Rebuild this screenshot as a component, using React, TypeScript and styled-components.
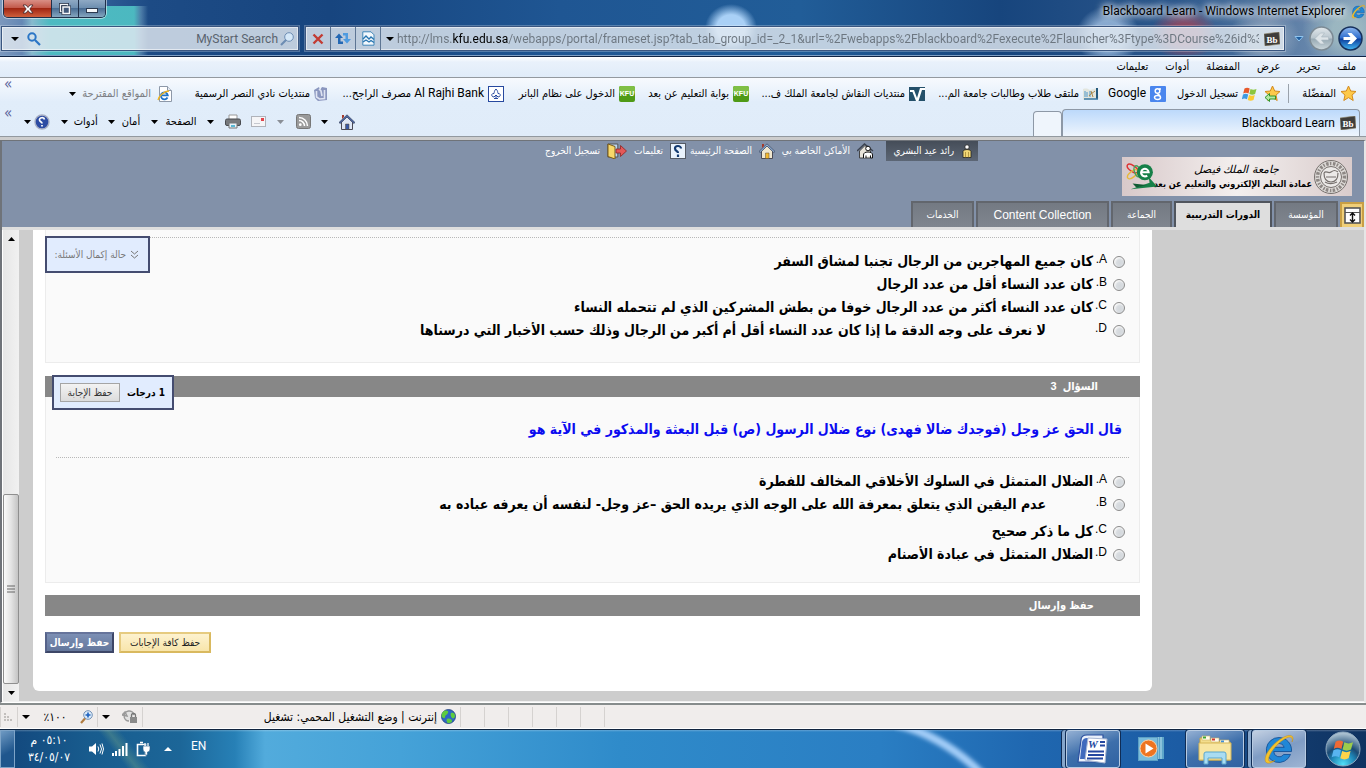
import React from "react";
import styled, { createGlobalStyle, css } from "styled-components";

const arabic = `"DejaVu Sans Condensed", "DejaVu Sans", sans-serif`;
const ui = `Roboto, "DejaVu Sans Condensed", "DejaVu Sans", sans-serif`;
const web = `"Liberation Sans", "DejaVu Sans Condensed", "DejaVu Sans", sans-serif`;

const GlobalStyle = createGlobalStyle`
  * { box-sizing: border-box; }
  html, body { margin: 0; padding: 0; }
  body { font-family: ${web}; font-size: 11px; color: #000; background: #cdcdcd; }
  button { font: inherit; color: inherit; background: none; border: 0; padding: 0; margin: 0; white-space: nowrap; cursor: pointer; }
  a { color: inherit; text-decoration: none; white-space: nowrap; }
  svg { display: block; flex: none; direction: ltr; }
`;

/* ---------- window frame ---------- */
const Desktop = styled.div`
  min-height: 100vh;
  display: flex;
  flex-direction: column;
  overflow: hidden;
`;

const Glass = styled.header`
  height: 57px;
  flex: none;
  border-bottom: 1px solid #0f2344;
  box-shadow: inset 0 -1px 0 #7f9fc4;
  background:
    linear-gradient(90deg, transparent 22px, rgba(150, 205, 215, 0.75) 32px, rgba(78, 190, 195, 0.95) 50px 134px, rgba(120, 170, 200, 0.5) 141px, transparent 148px) 0 6px / 100% 51px no-repeat,
    radial-gradient(ellipse 26px 24px at 731px 28px, #a9d0f6 55%, transparent 100%),
    radial-gradient(ellipse 32px 30px at calc(100% - 258px) 36px, rgba(170, 200, 232, 0.75) 50%, transparent 100%),
    radial-gradient(ellipse 34px 26px at calc(100% - 182px) 34px, rgba(168, 70, 88, 0.75) 40%, transparent 100%),
    radial-gradient(ellipse 36px 30px at calc(100% - 102px) 38px, rgba(150, 170, 192, 0.8) 40%, transparent 100%),
    radial-gradient(ellipse 44px 40px at calc(100% - 20px) 30px, rgba(165, 192, 196, 0.8) 30%, transparent 100%),
    linear-gradient(90deg, #7c98bd 0, #3f6da5 60px, #1d4b85 150px, #17457f 330px, #1f5693 560px, #215d98 800px, #17457d 1000px, #2c578c 1180px, #7f9ab8 1366px);
`;
const TitleRow = styled.div`
  display: flex;
  justify-content: space-between;
  height: 26px;
`;
const Title = styled.div`
  display: flex;
  align-items: center;
  gap: 6px;
  height: 22px;
  font: 12px/22px ${ui};
  text-shadow: 0 0 6px #fff, 0 0 8px rgba(255, 255, 255, 0.9), 0 0 10px rgba(255, 255, 255, 0.7);
`;
const WindowButtons = styled.div`
  display: flex;
  height: 18px;
  margin-left: 3px;
  border: 1px solid #20304a;
  border-top: 0;
  border-radius: 0 0 5px 5px;
  box-shadow: 0 0 0 1px rgba(255, 255, 255, 0.5);
  overflow: hidden;
  direction: ltr;
`;
const WindowButton = styled.button<{ $close?: boolean }>`
  width: ${(p) => (p.$close ? 47 : 27)}px;
  display: flex;
  align-items: center;
  justify-content: center;
  border-left: ${(p) => (p.$close ? 0 : 1)}px solid #20304a;
  background: ${(p) =>
    p.$close
      ? "linear-gradient(#d98f86, #c35a4c 45%, #a02613 50%, #cf5f3c)"
      : "linear-gradient(#8fa9c4, #6e8fb0 45%, #4a6d94 50%, #85a6bf)"};
`;
const AddressRow = styled.div`
  display: flex;
  align-items: center;
  height: 25px;
  padding: 0 3px 0 1px;
`;
const NavButtons = styled.div`
  display: flex;
  align-items: center;
  gap: 4px;
  margin-left: 7px;
`;
const glassBox = css`
  display: flex;
  align-items: center;
  height: 25px;
  border: 1px solid #3a5680;
  box-shadow: inset 0 0 0 1px rgba(255, 255, 255, 0.55), 0 0 0 1px rgba(255, 255, 255, 0.25);
  background: rgba(226, 233, 240, 0.82);
`;
const AddressBox = styled.div`
  ${glassBox}
  flex: 1;
  min-width: 0;
`;
const SearchBox = styled.div`
  ${glassBox}
  width: 298px;
  margin-right: 6px;
  padding: 0 4px 0 0;
`;
const AddressInput = styled.input`
  flex: 1;
  min-width: 0;
  height: 22px;
  margin: 0 0 0 -2px;
  padding: 0;
  border: 0;
  outline: 0;
  direction: ltr;
  font: 12px/22px ${ui};
  color: #6c7680;
  -webkit-text-fill-color: transparent;
  background: linear-gradient(90deg, #6c7680 55px, #000 55px, #000 111px, #6c7680 111px);
  -webkit-background-clip: text;
  background-clip: text;
`;
const SearchInput = styled.input`
  flex: 1;
  min-width: 0;
  padding: 0 2px;
  border: 0;
  outline: 0;
  background: none;
  direction: ltr;
  text-align: right;
  font: 12px/22px ${ui};
  color: #59636e;
  &::placeholder { color: #59636e; opacity: 1; }
`;
const BoxButton = styled.button<{ $line?: boolean; $narrow?: boolean }>`
  display: flex;
  flex: none;
  align-items: center;
  justify-content: center;
  width: ${(p) => (p.$narrow ? 18 : 25)}px;
  height: 23px;
  border-right: ${(p) => (p.$line ? 1 : 0)}px solid #5d7593;
`;

/* ---------- browser bars ---------- */
const MenuBar = styled.nav`
  display: flex;
  align-items: center;
  flex: none;
  gap: 17px;
  height: 21px;
  padding: 0 10px;
  font: 11px/20px ${arabic};
  border-bottom: 1px solid #93999f;
  background: linear-gradient(#fff, #e9f1fb 5px, #e0ecf9);
`;
const BarStack = styled.div`
  flex: none;
  background: linear-gradient(#f7fafe, #e1edfa 24px, #e0ecf9);
  border-bottom: 1px solid #93999f;
`;
const FavRow = styled.nav`
  display: flex;
  align-items: center;
  height: 31px;
  padding: 0 9px 0 4px;
`;
const FavItem = styled.a<{ $w: number; $muted?: boolean }>`
  display: flex;
  align-items: center;
  gap: ${(p) => (p.$muted ? 6 : 4)}px;
  flex: 0 0 ${(p) => p.$w}px;
  font: 11px/20px ${arabic};
  color: ${(p) => (p.$muted ? "#7d7f83" : "#000")};
`;
const FavLatin = styled.span`
  font: 12px/20px ${ui};
`;
const Separator = styled.span`
  width: 1px;
  height: 19px;
  margin: 0 12px 0 7px;
  background: #9aa2ab;
`;
const Chevrons = styled.button<{ $push?: boolean }>`
  align-self: flex-start;
  margin-right: ${(p) => (p.$push ? "auto" : 0)};
  font: 15px/12px ${arabic};
  color: #59639b;
`;
const TabRow = styled.div`
  display: flex;
  align-items: flex-end;
  height: 27px;
  padding: 0 6px 0 4px;
`;
const BrowserTab = styled.button<{ $blank?: boolean }>`
  display: flex;
  align-items: center;
  gap: 5px;
  width: ${(p) => (p.$blank ? 29 : 298)}px;
  height: ${(p) => (p.$blank ? 25 : 27)}px;
  padding: 0 3px;
  border: 1px solid #8d98a6;
  border-bottom: 0;
  border-radius: 4px 4px 0 0;
  background: ${(p) => (p.$blank ? "#eff5fc" : "linear-gradient(#bcd9fb, #eef5fd)")};
  font: 12px/20px ${ui};
`;
const CommandBar = styled.div`
  display: flex;
  align-items: center;
  align-self: center;
  justify-content: space-between;
  width: 331px;
  height: 24px;
  margin: 0 auto 0 12px;
  font: 11px/20px ${arabic};
`;
const CommandArea = styled.div`
  display: flex;
  flex: 1;
  justify-content: flex-end;
  align-items: center;
  height: 29px;
`;
const Command = styled.button<{ $w: number }>`
  display: flex;
  align-items: center;
  justify-content: space-between;
  width: ${(p) => p.$w}px;
`;

/* ---------- learning portal ---------- */
const Viewport = styled.div`
  flex: 1;
  display: flex;
  flex-direction: column;
  border: solid #6f7379;
  border-width: 1px 0 0 2px;
  margin-top: 3px;
  border-right: 2px solid #e6e6e6;
  border-bottom: 1px solid #fff;
`;
const PortalHead = styled.div`
  flex: none;
  background: #8291a9;
  border-bottom: 3px solid #dedede;
`;
const Brand = styled.div`
  display: flex;
  align-items: flex-start;
  padding-right: 12px;
`;
const Logo = styled.div`
  display: flex;
  align-items: center;
  gap: 1px;
  width: 230px;
  height: 39px;
  margin: 16px 0 5px;
  padding: 0 3px;
  background: linear-gradient(90deg, #d8c9ca, #f3efee 50%, #d9cccc);
`;
const LogoText = styled.div`
  flex: 1;
  min-width: 0;
  text-align: center;
  white-space: nowrap;
`;
const LogoScript = styled.div`
  font: italic 11px/15px "DejaVu Serif", "DejaVu Sans", serif;
`;
const LogoName = styled.div`
  font: bold 9px/15px ${arabic};
`;
const UserNav = styled.nav`
  display: flex;
  align-items: flex-start;
  margin-right: 144px;
`;
const NavLink = styled.a<{ $w: number; $user?: boolean }>`
  display: flex;
  align-items: center;
  gap: 7px;
  flex: 0 0 ${(p) => p.$w}px;
  height: 20px;
  padding-right: ${(p) => (p.$user ? 5 : 0)}px;
  margin-left: ${(p) => (p.$user ? 12 : 0)}px;
  font: 10px/20px ${arabic};
  color: #fff;
  background: ${(p) => (p.$user ? "linear-gradient(#454d58, #5c6675)" : "none")};
`;
const Tabs = styled.div`
  display: flex;
  align-items: flex-end;
  gap: 2px;
`;
const PortalTab = styled.button<{ $w: number; $active?: boolean }>`
  width: ${(p) => p.$w}px;
  height: 26px;
  border: 2px solid;
  border-bottom: 0;
  font: ${(p) => (p.$active ? "bold " : "")}10px/22px ${arabic};
  color: ${(p) => (p.$active ? "#000" : "#fff")};
  background: ${(p) => (p.$active ? "#dedede" : "linear-gradient(#747a83, #80868f)")};
  border-color: ${(p) => (p.$active ? "#50555d" : "#62666d")};
`;
const TabLatin = styled.span`
  font: 12px/22px ${web};
`;
const CollapseButton = styled.button`
  display: flex;
  align-items: center;
  justify-content: center;
  width: 24px;
  height: 25px;
  border: 2px solid #c89f45;
  border-bottom: 0;
  background: #f0cf78;
`;
const Stage = styled.div`
  position: relative;
  flex: 1;
  display: flex;
  background: #cdcdcd;
  border-bottom: 1px solid #f0f0f0;
`;
const Panel = styled.main`
  flex: 1;
  min-width: 0;
  margin: 0 212px 10px 14px;
  padding: 0 12px 37px;
  background: #fff;
  border-radius: 0 0 6px 6px;
`;
const Scrollbar = styled.div`
  display: flex;
  flex-direction: column;
  width: 17px;
  border-left: 1px solid #fff;
  background: linear-gradient(90deg, #e6e6e6, #f1f1f1);
`;
const ScrollArrow = styled.button`
  display: flex;
  align-items: center;
  justify-content: center;
  height: 17px;
  width: 100%;
`;
const Thumb = styled.div`
  display: flex;
  align-items: center;
  justify-content: center;
  height: 190px;
  margin-top: auto;
  border: 1px solid #8f8f8f;
  border-radius: 2px;
  background: linear-gradient(90deg, #fafafa, #e4e4e4 50%, #c4c4c4);
`;
const QuestionBox = styled.fieldset<{ $cut?: boolean }>`
  margin: 0 0 ${(p) => (p.$cut ? 13 : 12)}px;
  min-width: 0;
  padding: ${(p) => (p.$cut ? "7px 10px 20px" : "19px 10px 16px")};
  border: 1px solid #ececec;
  border-top: 0;
  background: #fafafa;
`;
const Prompt = styled.p`
  margin: 0 7px 14px;
  font: bold 14px/27px ${arabic};
  color: #0b0bf0;
`;
const Options = styled.div`
  padding-top: 12px;
  border-top: 1px dotted #b8b8b8;
`;
const Option = styled.label<{ $wide?: boolean }>`
  display: flex;
  align-items: center;
  height: 23px;
  margin-bottom: ${(p) => (p.$wide ? 4 : 0)}px;
  padding-right: 4px;
`;
const Radio = styled.input`
  appearance: none;
  width: 12px;
  height: 12px;
  margin: 0 0 0 6px;
  border: 1px solid #8b8b8b;
  border-radius: 50%;
  background: radial-gradient(circle at 60% 60%, #d4d8dc, #d9dde1 40%, #f6f6f6 65%);
`;
const Letter = styled.span`
  width: 14px;
  align-self: flex-start;
  font: 12px/19px ${web};
`;
const Answer = styled.span<{ $indent?: boolean }>`
  margin-right: ${(p) => (p.$indent ? 47 : 0)}px;
  font: bold 14px/23px ${arabic};
  white-space: nowrap;
`;
const SectionBar = styled.div<{ $pad: number }>`
  position: relative;
  padding-right: ${(p) => p.$pad}px;
  background: #878787;
  color: #fff;
  font: bold 11px/21px ${web};
`;
const noteBox = css`
  position: absolute;
  display: flex;
  align-items: center;
  border: 2px solid #444c70;
  background: #e1ecfe;
`;
const StatusNote = styled.button`
  ${noteBox}
  left: 43px;
  top: 6px;
  width: 105px;
  height: 37px;
  padding: 0 10px;
  gap: 5px;
  font: 10px/20px ${arabic};
  color: #777;
`;
const PointsNote = styled.div`
  ${noteBox}
  left: 7px;
  top: -1px;
  width: 122px;
  height: 35px;
  padding: 0 7px 0 6px;
  justify-content: space-between;
  font: bold 10px/27px ${arabic};
  color: #000;
`;
const SaveSmall = styled.button`
  width: 60px;
  height: 19px;
  border: 1px solid #a5a5a5;
  background: linear-gradient(#f3f3f3, #dcdcdc);
  font: 10px/16px ${arabic};
  color: #333;
`;
const Actions = styled.div`
  display: flex;
  justify-content: flex-end;
  gap: 5px;
  margin-top: 16px;
`;
const ActionButton = styled.button<{ $primary?: boolean }>`
  width: ${(p) => (p.$primary ? 69 : 92)}px;
  height: 21px;
  border: 2px solid;
  border-color: ${(p) => (p.$primary ? "#66749b #3d4667 #3d4667 #56638a" : "#e6cb80 #d9b95f #d9b95f #e6cb80")};
  font: ${(p) => (p.$primary ? "bold " : "")}10px/16px ${arabic};
  color: ${(p) => (p.$primary ? "#fff" : "#222")};
  background: ${(p) => (p.$primary ? "linear-gradient(#7c8fb4, #64779c)" : "linear-gradient(#fdf2cf, #f8e5ab)")};
`;

/* ---------- status bar and taskbar ---------- */
const StatusBar = styled.footer`
  flex: none;
  display: flex;
  justify-content: flex-end;
  align-items: center;
  height: 26px;
  border-top: 2px solid #868c8c;
  border-bottom: 1px solid #fff;
  background: #f0edec;
  font: 11px/20px ${arabic};
`;
const StatusCell = styled.div<{ $w: number }>`
  display: flex;
  align-items: center;
  gap: 4px;
  width: ${(p) => p.$w}px;
  height: 20px;
  padding: 0 4px;
  border-left: 1px solid #d5d2d0;
  white-space: nowrap;
`;
const StatusText = styled.span`
  font: 12px/20px ${arabic};
`;
const StatusButton = styled.button`
  display: flex;
  align-items: center;
  justify-content: space-between;
  width: 100%;
`;
const Taskbar = styled.div`
  flex: none;
  display: flex;
  align-items: center;
  height: 39px;
  border-top: 1px solid #10243f;
  background:
    linear-gradient(rgba(255, 255, 255, 0.25), transparent 2px),
    linear-gradient(52deg, transparent 0 100px, rgba(160, 200, 130, 0.25) 108px, transparent 118px),
    linear-gradient(90deg, #12467c 0, #185c8e 90px, #1c6698 180px, #2780b6 235px, #52abdc 265px, #45a2d8 400px, #2f8bca 620px, #2a7ec3 880px, #1f67b0 1030px, #1c5ca4 1180px, #123a6c 1300px, #0f3361 1366px);
`;
const TaskButton = styled.button<{ $w: number; $gap: number; $state?: "open" | "active"; $stack?: boolean }>`
  display: flex;
  flex: none;
  align-items: center;
  justify-content: center;
  width: ${(p) => p.$w}px;
  height: 38px;
  margin-left: ${(p) => p.$gap}px;
  border-radius: 3px;
  ${(p) =>
    p.$state &&
    css`
      border: 1px solid #b7cbe2;
      box-shadow: 0 0 0 1px #0f2c55${p.$stack ? ", -4px 0 0 0 #86a6cb, -5px 0 0 0 #0f2c55" : ""};
      background: ${p.$state === "active"
        ? "linear-gradient(160deg, #c3d0e2, #7f9cc4 50%, #9db4d3)"
        : "linear-gradient(160deg, #94b0d3, #3e6fab 50%, #2f62a2)"};
    `}
`;
const Tray = styled.div`
  display: flex;
  align-items: center;
  height: 38px;
  margin-right: auto;
  color: #fff;
`;
const Language = styled.button`
  align-self: flex-start;
  margin: 6px 0 0 19px;
  font: 12px/20px ${ui};
`;
const HiddenIcons = styled.button`
  margin-left: 13px;
`;
const TrayIcons = styled.div`
  display: flex;
  align-items: center;
  gap: 8px;
`;
const Clock = styled.button`
  width: 56px;
  margin: 0 11px 0 6px;
  font: 12px/17px ${arabic};
  text-align: center;
`;
const ShowDesktop = styled.button`
  width: 15px;
  height: 38px;
  border: 1px solid #7ea4c8;
  background: linear-gradient(150deg, #6f9ac3, #1f568d 60%);
`;

/* ---------- icons ---------- */
const Arrow = ({ up, c = "#000", s = 7 }: { up?: boolean; c?: string; s?: number }) => (
  <svg width={s} height={4} viewBox="0 0 8 4" preserveAspectRatio="none">
    <path d={up ? "M0 4 4 0 8 4z" : "M0 0h8L4 4z"} fill={c} />
  </svg>
);
const LightStreak = () => (
  <svg width="96" height="38" viewBox="0 0 96 38">
    <defs>
      <filter id="soft" x="-20%" y="-20%" width="140%" height="140%">
        <feGaussianBlur stdDeviation="2" />
      </filter>
    </defs>
    <path d="M2-6Q50 6 90 46" fill="none" stroke="#a3cdf8" strokeWidth="8" filter="url(#soft)" />
  </svg>
);
const IeIcon = ({ s = 16 }: { s?: number }) => (
  <svg width={s} height={s} viewBox="0 0 32 32">
    <path
      d="M16 4.500A12.500 12.500 0 1 0 27.500 21.500h-6.800a5.500 5.500 0 0 1-10-3H28.500A12.700 12.700 0 0 0 16 4.500zm-5.200 9.800a5.400 5.400 0 0 1 10.400 0z"
      fill="#2187d6"
      stroke="#0d4a92"
      strokeWidth="0.8"
    />
    <path d="M29 9c3-6-1-8.500-8-5C11 9 0 22 2.500 28.500c1.500 3 6 1.500 9.500-1-4 1.500-6 1.500-6.500-.5C5 20 18 6.500 25 4.300c3.500-1 5 1 4 4.700z" fill="#f5c32c" stroke="#c98f10" strokeWidth="0.5" />
  </svg>
);
const PageIe = () => (
  <svg width="16" height="16" viewBox="0 0 16 16">
    <path d="M2.500.5h8l4 4v11h-12z" fill="#fff" stroke="#8d98a8" />
    <path d="M10.500.5v4h4" fill="#e5eaf2" stroke="#8d98a8" />
    <path d="M10.500 11.500a3.500 3.500 0 1 1 .3-2.200H4.500" fill="none" stroke="#1c73c8" strokeWidth="1.800" />
    <path d="M1 14C2 10 7 5 12 5" fill="none" stroke="#efb520" strokeWidth="1.300" />
  </svg>
);
const SearchIcon = ({ c, flip, s = 14 }: { c: string; flip?: boolean; s?: number }) => (
  <svg width={s} height={s} viewBox="0 0 14 14">
    <g transform={flip ? "translate(14 0) scale(-1 1)" : undefined}>
      <circle cx="5" cy="5" r={flip ? 4.3 : 3.7} fill={flip ? "#d5e8f8" : "none"} stroke={c} strokeWidth={flip ? 1 : 2} />
      <path d="m8 8 5 5" stroke={c} strokeWidth="2.200" />
    </g>
  </svg>
);
const ZoomIcon = () => (
  <svg width="13" height="14" viewBox="0 0 13 14">
    <circle cx="8" cy="5" r="4.300" fill="#dcebf9" stroke="#6f8fb5" />
    <path d="M8 2.500v5M5.500 5h5" stroke="#1c62bf" strokeWidth="1.600" />
    <path d="m5 8.500-4 4.500" stroke="#b07c40" strokeWidth="2.200" />
  </svg>
);
const BbIcon = () => (
  <svg width="16" height="14" viewBox="0 0 16 14">
    <path d="M0 2 15 0l1 12-15 2z" fill="#3f3d3b" stroke="#8c8265" strokeWidth="0.600" />
    <text x="8" y="10.500" textAnchor="middle" fontSize="9" fontWeight="bold" fontFamily="Liberation Serif" fill="#fff">Bb</text>
  </svg>
);
const Orb = ({ on }: { on?: boolean }) => (
  <svg width="25" height="25" viewBox="0 0 25 25">
    <defs>
      <linearGradient id={on ? "orbOn" : "orbOff"} x1="0" y1="0" x2="0" y2="1">
        <stop offset="0" stopColor={on ? "#8fb8ee" : "#e2e8ec"} />
        <stop offset="0.480" stopColor={on ? "#2e6dce" : "#b9c6ce"} />
        <stop offset="0.520" stopColor={on ? "#0c3d9c" : "#97a9b3"} />
        <stop offset="1" stopColor={on ? "#43b8f4" : "#ccd8dd"} />
      </linearGradient>
    </defs>
    <circle cx="12.500" cy="12.500" r="11.500" fill={`url(#${on ? "orbOn" : "orbOff"})`} stroke={on ? "#16305c" : "#7c8a94"} strokeWidth="1.500" />
    <path
      d={on ? "M5.500 11h7L9.500 7h4l5.500 5.500-5.500 5.500h-4l3-4h-7z" : "M19.500 11h-7l3-4h-4L6 12.500l5.500 5.500h4l-3-4h7z"}
      fill={on ? "#fff" : "#dde4e8"}
      stroke={on ? "none" : "#a9b7bf"}
      strokeWidth="0.600"
    />
  </svg>
);
const Star = ({ add }: { add?: boolean }) => (
  <svg width="17" height="17" viewBox="0 0 17 17">
    <path d="m8.500 1 2.200 5 5.300.5-4 3.600 1.200 5.400-4.700-2.900-4.700 2.900L5 10.100 1 6.500 6.300 6z" fill="#fdc94a" stroke="#d48a1c" />
    {add && <path d="m1 12.500 4.500-4v2.500h6v3h-6v2.500z" fill="#b5e8a4" stroke="#1f8d1c" strokeWidth="0.900" />}
  </svg>
);
const Flag = () => (
  <svg width="16" height="16" viewBox="0 0 16 16">
    <path d="M2.500 2.500c2-1.200 3.500-1 5.200 0L6.500 7.500c-2-1-3.500-1-5.300 0z" fill="#e8592b" />
    <path d="M8.500 3c2 1 3.700 1 6 0l-1.400 5c-2 1-3.800 1-5.800 0z" fill="#8cc63e" />
    <path d="M1 8.500c2-1 3.500-1 5.200 0L5 13.300c-2-1-3.500-1-5.200 0z" fill="#3d9ae2" />
    <path d="M7 9c2 1 3.800 1 5.800 0l-1.300 5c-2 1-3.800 1-5.800 0z" fill="#fccb31" />
  </svg>
);
const Google = () => (
  <svg width="16" height="16" viewBox="0 0 16 16">
    <rect width="16" height="16" rx="1" fill="#4a86ee" />
    <g fill="none" stroke="#fff" strokeWidth="1.500">
      <circle cx="7.500" cy="5" r="2.300" />
      <ellipse cx="7.500" cy="11.500" rx="3" ry="2" />
      <path d="M8 7.500c-1 .8 1.500 1.200 2 2.300M9 3h2" />
    </g>
  </svg>
);
const Kfu = () => (
  <svg width="16" height="16" viewBox="0 0 16 16">
    <rect width="16" height="16" rx="2" fill="#4f9a16" />
    <rect width="16" height="8" rx="2" fill="#7fbf45" />
    <text x="8" y="10" textAnchor="middle" fontSize="7" fontWeight="bold" fontFamily="Liberation Sans" fill="#fff">KFU</text>
  </svg>
);
const Emblem = () => (
  <svg width="16" height="16" viewBox="0 0 16 16">
    <path d="M0 3c4-1 5 0 7 1l7-2 2 11c-3-1-5 0-8 1-3-1-5-1-8 0z" fill="#e3e6de" />
    <path d="M13 2h2v11h-2z" fill="#24597c" />
    <path d="M2 5v6M4 6v5M7 5v6" stroke="#4c96c9" />
    <path d="M6 10c2-3 4-3 6-5M8 5l2 6" fill="none" stroke="#a9884a" />
    <path d="M1 13h14" stroke="#3977a1" strokeWidth="1.500" />
  </svg>
);
const Forum = () => (
  <svg width="16" height="16" viewBox="0 0 16 16">
    <rect y="1" width="16" height="14" fill="#24506a" />
    <path d="M1 4h4l3 8 3-10h5v2h-3L9.500 15H7L3.500 6H1z" fill="#fff" />
  </svg>
);
const Bank = () => (
  <svg width="16" height="16" viewBox="0 0 16 16">
    <rect x="0.500" y="0.500" width="15" height="15" fill="#fff" stroke="#27499f" />
    <path d="M8 3C6 5 6.500 6 6 7.500 3 7 3 11 6 11l2-2 2 2c3 0 3-4 0-3.500C9.500 6 10 5 8 3zM8 9v3M6 12.500h4" fill="none" stroke="#27499f" />
  </svg>
);
const Nasr = () => (
  <svg width="14" height="16" viewBox="0 0 14 16">
    <path d="m0 4 5-3 1 3 2-3 5 1v12l-9 1-3-3z" fill="#8b97bf" />
    <path d="M2.500 5v6l3 2 5-.5V4M5 3l2 2 1 5" fill="none" stroke="#dfe4f2" strokeWidth="1.600" />
  </svg>
);
const Home = ({ portal }: { portal?: boolean }) => (
  <svg width="16" height="16" viewBox="0 0 16 16">
    <path d="M2.500 8v7.500h11V8L8 2.500z" fill={portal ? "#efe6cf" : "#dfe7f5"} stroke="#4a4a55" />
    <path d="M0 8.500 8 .8l8 7.700-1.200 1L8 3 1.200 9.500z" fill={portal ? "#8fb1d8" : "#4d68a8"} stroke="#3b455c" strokeWidth="0.700" />
    <path d="M3 5V1h2v2" fill="#a43a2b" />
    <path d="M6.500 10H10v5.500H6.500z" fill={portal ? "#f3b830" : "#3a59a5"} stroke="#5a4a30" strokeWidth="0.500" />
  </svg>
);
const Rss = () => (
  <svg width="15" height="15" viewBox="0 0 15 15">
    <rect x="0.500" y="0.500" width="14" height="14" rx="2" fill="#9a9a9a" stroke="#777" />
    <circle cx="4.300" cy="10.700" r="1.400" fill="#fff" />
    <path d="M3 6.500a5.500 5.500 0 0 1 5.500 5.500M3 3.500a8.500 8.500 0 0 1 8.500 8.500" fill="none" stroke="#fff" strokeWidth="1.500" />
  </svg>
);
const Mail = () => (
  <svg width="15" height="11" viewBox="0 0 15 11">
    <rect x="0.500" y="0.500" width="14" height="10" fill="#f5f5f7" stroke="#b0b3ba" />
    <rect x="10" y="2" width="3" height="3" fill="#e2434a" />
    <path d="M3 7.500h6" stroke="#c5c8cf" />
  </svg>
);
const Printer = () => (
  <svg width="16" height="15" viewBox="0 0 16 15">
    <path d="M4 1h8v5H4z" fill="#fff" stroke="#999" />
    <rect x="0.500" y="5" width="15" height="6.500" rx="1.500" fill="#77797c" stroke="#4a4c50" />
    <path d="M4 9h8v5H4z" fill="#e8f2f8" stroke="#777" />
    <path d="M6 11h4v2H6z" fill="#59b8d4" />
  </svg>
);
const HelpBall = () => (
  <svg width="16" height="16" viewBox="0 0 16 16">
    <circle cx="8" cy="8" r="7" fill="#2c4ba3" stroke="#a8afc4" strokeWidth="1.400" />
    <path d="M10.500 5.500a2.500 2 0 1 0-5 .5c0 2 2.500 1.500 2.500 3.500M8 11v1.500" fill="none" stroke="#fff" strokeWidth="1.700" />
  </svg>
);
const Person = () => (
  <svg width="12" height="14" viewBox="0 0 12 14">
    <circle cx="6" cy="3" r="2.200" fill="#fff" stroke="#222" strokeWidth="0.800" />
    <path d="M2 13.500v-6q0-2 4-2t4 2v6z" fill="#f2d774" stroke="#222" strokeWidth="0.800" />
    <path d="M4.500 8v5.500M7.500 8v5.500" stroke="#8a6d1e" strokeWidth="0.600" />
  </svg>
);
const Places = () => (
  <svg width="17" height="16" viewBox="0 0 17 16">
    <path d="M2.500 8v7h11V8L8 2.500z" fill="#e8e4da" stroke="#444" />
    <path d="M0 8 7.500 1 16 8" fill="none" stroke="#3c4350" strokeWidth="1.500" />
    <circle cx="11" cy="5.500" r="2.300" fill="#fff" stroke="#111" />
    <path d="M6.500 15v-3q0-3 4.500-3t4.500 3v3h-2v-2.500M9 15v-2.500" fill="#fff" stroke="#111" />
  </svg>
);
const HelpBox = () => (
  <svg width="16" height="16" viewBox="0 0 16 16">
    <rect x="0.500" y="0.500" width="15" height="15" fill="#e9f2fc" stroke="#555b66" />
    <path d="M11 5.500a3 2.500 0 1 0-6 0c0 3 3 2 3 4.500M8 11.500V14" fill="none" stroke="#143a70" strokeWidth="2.200" />
  </svg>
);
const Exit = () => (
  <svg width="20" height="16" viewBox="0 0 20 16">
    <path d="M.8 1h10v13h-10z" fill="#bcd6f2" stroke="#555" />
    <path d="m1 1 7 2.500V16l-7-2.500z" fill="#f8d96a" stroke="#7a5c1c" />
    <path d="M9 6h4.500V2.500l6 5.500-6 5.500V10H9z" fill="#e45858" stroke="#8e2424" strokeWidth="0.800" />
  </svg>
);
const Seal = () => (
  <svg width="36" height="36" viewBox="0 0 36 36">
    <circle cx="18" cy="18" r="16.500" fill="#dedbd8" stroke="#77716e" strokeWidth="1" />
    <circle cx="18" cy="18" r="13.500" fill="none" stroke="#8d8784" strokeWidth="3.500" strokeDasharray="1.500 1.600 2.500 1.300" />
    <circle cx="18" cy="18" r="10.500" fill="#ebe9e7" stroke="#77716e" />
    <path d="M11 14c2-3 4 1 7-1s4-2 7 0M11 14c0 6 3 9 7 9s7-3 7-9M13 18h10M12 23c3 2 8 2 12 0" fill="none" stroke="#77716e" strokeWidth="1.200" />
  </svg>
);
const ELogo = () => (
  <svg width="35" height="34" viewBox="0 0 37 34">
    <g fill="none" strokeWidth="1.500">
      <ellipse cx="8" cy="8" rx="6.500" ry="3" transform="rotate(35 8 8)" stroke="#d33" />
      <ellipse cx="8" cy="14" rx="6.500" ry="3" transform="rotate(-40 8 14)" stroke="#e8b83a" />
      <ellipse cx="13" cy="11" rx="6" ry="3" transform="rotate(70 13 11)" stroke="#48a05a" />
    </g>
    <circle cx="21" cy="12" r="8.500" fill="#168048" />
    <path d="M17 12h8a4 4 0 1 0-1.500 3.500" fill="none" stroke="#fff" strokeWidth="2.200" />
    <path d="m6 30 28-3-9-10 1 6z" fill="#168048" />
    <path d="m8 24 15 1.500L12 28z" fill="#0f5c33" />
  </svg>
);
const Globe = () => (
  <svg width="15" height="15" viewBox="0 0 15 15">
    <circle cx="7.500" cy="7.500" r="7" fill="#2e66c4" stroke="#1e3f7c" strokeWidth="0.800" />
    <path d="M3 2c3-1 5 0 4 2S4 6 4 8s-2 1-3 0 0-5 2-6zM10 4c3-1 4 1 4 3s-2 3-3 2-2-4-1-5zM6 10c2-1 5 0 5 2s-3 2-4 2-2-3-1-4z" fill="#5dcb3f" />
  </svg>
);
const PageLock = () => (
  <svg width="16" height="15" viewBox="0 0 16 15">
    <path d="M12 6A5 5 0 1 0 7 12M0 6l3-3 2 4z" fill="#e2e2e2" stroke="#9a9a9a" strokeWidth="1.500" />
    <rect x="8" y="8" width="7" height="6" fill="#8a8a8a" />
    <path d="M9.500 8V6.500a2 2 0 0 1 4 0V8" fill="none" stroke="#777" strokeWidth="1.300" />
  </svg>
);
const StartOrb = () => (
  <svg width="38" height="36" viewBox="0 0 38 36">
    <defs>
      <radialGradient id="start" cx="0.500" cy="0.950" r="0.900">
        <stop offset="0" stopColor="#52e0f8" />
        <stop offset="0.400" stopColor="#1d83b4" />
        <stop offset="0.600" stopColor="#1b4a74" />
        <stop offset="1" stopColor="#a9c0d0" />
      </radialGradient>
    </defs>
    <circle cx="19" cy="18" r="17" fill="url(#start)" stroke="#8fa9bf" />
    <g transform="translate(8 7) scale(1.450)">
      <path d="M2.500 2.500c2-1.200 3.500-1 5.200 0L6.500 7.500c-2-1-3.500-1-5.300 0z" fill="#ef6a35" />
      <path d="M8.500 3c2 1 3.700 1 6 0l-1.400 5c-2 1-3.800 1-5.800 0z" fill="#9ccc4c" />
      <path d="M1 8.500c2-1 3.500-1 5.200 0L5 13.300c-2-1-3.500-1-5.200 0z" fill="#58b4f0" />
      <path d="M7 9c2 1 3.800 1 5.800 0l-1.300 5c-2 1-3.800 1-5.800 0z" fill="#fdd44a" />
    </g>
  </svg>
);
const Folder = () => (
  <svg width="34" height="32" viewBox="0 0 34 32">
    <path d="M2 5h8l2 2h8l2 2h10v18H2z" fill="#f3dd8c" stroke="#c9a544" />
    <path d="M4 3h8v4H4zM13 5h8v4h-8zM22 7h9v4h-9z" fill="#fffbe8" stroke="#cdb468" strokeWidth="0.600" />
    <path d="M5 3.500h3v2H5z" fill="#3fa535" />
    <path d="M14 5.500h3v2h-3z" fill="#d2362e" />
    <path d="M23 7.500h3v2h-3z" fill="#3f8fd8" />
    <path d="M1 10h32v17H1z" fill="#f8e6a2" stroke="#d5b658" />
    <path d="M6 31V21q0-2 2-2h18q2 0 2 2v10h-4v-6H10v6z" fill="#a9dcf2" stroke="#5ba6cc" />
  </svg>
);
const Player = () => (
  <svg width="27" height="26" viewBox="0 0 27 26">
    <path d="M18 1h8v22h-8z" fill="#5da5c9" />
    <path d="M20 1v22M23 1v22" stroke="#b8e0ee" />
    <rect x="0.500" y="1.500" width="19" height="23" fill="#79bcdc" stroke="#5da0c4" />
    <circle cx="10.500" cy="12.500" r="8.500" fill="#ee7421" stroke="#fbd2a8" />
    <path d="M7.500 7.500v10l8-5z" fill="#fff" />
  </svg>
);
const Word = () => (
  <svg width="32" height="30" viewBox="0 0 32 30">
    <path d="M4 6q0-5 6-5h16v22l-8 5H1z" fill="#e9f0fb" stroke="#2b4f9e" strokeWidth="1.200" />
    <path d="M5 8q1-4 5-4h3L9 25H3z" fill="#3f69bd" />
    <path d="m11 4 19 1-2 24-20-3z" fill="#fff" stroke="#a9b7d3" />
    <text x="11" y="14" fontSize="11" fontWeight="bold" fontStyle="italic" fontFamily="Liberation Serif" fill="#2447a0">W</text>
    <path d="M23 8h5M23 11.500h5M11 17.500h16M11 21h16M10 24.500h16" stroke="#2447a0" strokeWidth="1.800" />
  </svg>
);
const Plug = () => (
  <svg width="15" height="16" viewBox="0 0 15 16">
    <path d="M1.500 3.500h8v11h-8zM4 1.500h3" fill="none" stroke="#fff" strokeWidth="1.600" />
    <path d="M7 5h7v3q0 3-2.500 3v3H9v-3Q7 11 7 8zM9 2.500V5M12 2.500V5" fill="#fff" stroke="#2a5f8c" strokeWidth="0.600" />
    <path d="M9 2v3M12 2v3" stroke="#fff" strokeWidth="1.200" />
  </svg>
);
const Signal = () => (
  <svg width="16" height="13" viewBox="0 0 16 13">
    <path d="M0 10h2v3H0zM3 8h2v5H3zM6.500 6h2v7h-2zM10 3h2v10h-2zM13.500 0h2v13h-2z" fill="#fff" />
  </svg>
);
const Volume = () => (
  <svg width="16" height="14" viewBox="0 0 16 14">
    <path d="M1 4.500h3L8 1v12L4 9.500H1z" fill="#fff" />
    <path d="M10 4.500q1.500 2.500 0 5M12 2.500q3 4.500 0 9M14 1.500q3 5.500 0 11" fill="none" stroke="#fff" />
  </svg>
);
const Refresh = () => (
  <svg width="16" height="15" viewBox="0 0 16 15">
    <path d="M0 7 4 2.500 8 7H5.500v3.500H8V13H3V7z" fill="#2468b4" />
    <path d="m16 8-4 4.500L8 8h2.500V4.500H8V2h5v6z" fill="#4f9be0" />
  </svg>
);
const Compat = () => (
  <svg width="13" height="15" viewBox="0 0 13 15">
    <path d="M.8.8H9l3 3v10.400H.8z" fill="#f2f8fd" stroke="#4186b8" />
    <path d="m1 8 3-3 3 3 2-2 3 2.500M1 11l3-2 3 2 2-1.500 3 2" fill="none" stroke="#2775b0" strokeWidth="1.300" />
  </svg>
);
const StopIcon = () => (
  <svg width="12" height="12" viewBox="0 0 12 12">
    <path d="m1.500 1.500 9 9m0-9-9 9" stroke="#c23b33" strokeWidth="2.400" />
  </svg>
);

/* ---------- content ---------- */
const menu = ["ملف", "تحرير", "عرض", "المفضلة", "أدوات", "تعليمات"];

const favourites = [
  { icon: <Flag />, text: "تسجيل الدخول", w: 92 },
  { icon: <Google />, latin: "Google", w: 67 },
  { icon: <Emblem />, text: "ملتقى طلاب وطالبات جامعة الم...", w: 174 },
  { icon: <Forum />, text: "منتديات النقاش لجامعة الملك ف...", w: 176 },
  { icon: <Kfu />, text: "بوابة التعليم عن بعد", w: 114 },
  { icon: <Kfu />, text: "الدخول على نظام البانر", w: 131 },
  { icon: <Bank />, latin: "Al Rajhi Bank", text: " مصرف الراجح...", w: 176 },
  { icon: <Nasr />, text: "منتديات نادي النصر الرسمية", w: 155 },
];

type Choice = { l: string; t: string; indent?: boolean; wide?: boolean };

const migration: Choice[] = [
  { l: "A", t: "كان جميع المهاجرين من الرجال تجنبا لمشاق السفر" },
  { l: "B", t: "كان عدد النساء أقل من عدد الرجال" },
  { l: "C", t: "كان عدد النساء أكثر من عدد الرجال خوفا من بطش المشركين الذي لم تتحمله النساء" },
  { l: "D", t: "لا نعرف على وجه الدقة ما إذا كان عدد النساء أقل أم أكبر من الرجال وذلك حسب الأخبار التي درسناها", indent: true },
];
const verse: Choice[] = [
  { l: "A", t: "الضلال المتمثل في السلوك الأخلاقي المخالف للفطرة" },
  { l: "B", t: "عدم اليقين الذي يتعلق بمعرفة الله على الوجه الذي يريده الحق –عز وجل- لنفسه أن يعرفه عباده به", indent: true, wide: true },
  { l: "C", t: "كل ما ذكر صحيح" },
  { l: "D", t: "الضلال المتمثل في عبادة الأصنام" },
];

const Choices = ({ name, items }: { name: string; items: Choice[] }) => (
  <Options>
    {items.map((o) => (
      <Option key={o.l} $wide={o.wide}>
        <Radio type="radio" name={name} />
        <Letter>{o.l}.</Letter>
        <Answer $indent={o.indent}>{o.t}</Answer>
      </Option>
    ))}
  </Options>
);

export default function App() {
  return (
    <Desktop dir="rtl">
      <GlobalStyle />
      <Glass>
        <TitleRow>
          <Title>
            <IeIcon s={15} />
            <span dir="ltr">Blackboard Learn - Windows Internet Explorer</span>
          </Title>
          <WindowButtons>
            <WindowButton $close aria-label="Close">
              <svg width="12" height="10" viewBox="0 0 12 10">
                <path d="M1 1h3l2 2.500L8 1h3L7.800 5 11 9H8L6 6.500 4 9H1l3.200-4z" fill="#fff" stroke="#43252a" strokeWidth="0.800" />
              </svg>
            </WindowButton>
            <WindowButton aria-label="Restore">
              <svg width="12" height="12" viewBox="0 0 12 12">
                <rect x="1.500" y="1.500" width="7" height="7" fill="none" stroke="#2c3a50" strokeWidth="3" />
                <rect x="1.500" y="1.500" width="7" height="7" fill="none" stroke="#f5f7f9" strokeWidth="1.300" />
                <rect x="4" y="4" width="6.500" height="6.500" fill="#6e8fb0" stroke="#2c3a50" strokeWidth="3" />
                <rect x="4" y="4" width="6.500" height="6.500" fill="#42597a" stroke="#f5f7f9" strokeWidth="1.500" />
              </svg>
            </WindowButton>
            <WindowButton aria-label="Minimize">
              <svg width="12" height="12" viewBox="0 0 12 12">
                <rect x="0.500" y="5.500" width="11" height="4" fill="#f5f7f9" stroke="#2c3a50" />
              </svg>
            </WindowButton>
          </WindowButtons>
        </TitleRow>
        <AddressRow>
          <NavButtons>
            <button aria-label="Back"><Orb on /></button>
            <button aria-label="Forward"><Orb /></button>
            <button aria-label="Recent pages">
              <svg width="13" height="6" viewBox="0 0 13 6">
                <path d="M3 .5h8L7 5z" fill="#1e5ea0" stroke="#8fc4ee" />
              </svg>
            </button>
          </NavButtons>
          <AddressBox>
            <BoxButton aria-label="Site"><BbIcon /></BoxButton>
            <AddressInput
              aria-label="Address"
              defaultValue="http://lms.kfu.edu.sa/webapps/portal/frameset.jsp?tab_tab_group_id=_2_1&url=%2Fwebapps%2Fblackboard%2Fexecute%2Flauncher%3Ftype%3DCourse%26id%3D"
            />
            <BoxButton $narrow aria-label="Show addresses"><Arrow s={8} /></BoxButton>
            <BoxButton $line aria-label="Compatibility view"><Compat /></BoxButton>
            <BoxButton $line aria-label="Refresh"><Refresh /></BoxButton>
            <BoxButton $line aria-label="Stop"><StopIcon /></BoxButton>
          </AddressBox>
          <SearchBox>
            <SearchIcon c="#6d8db3" flip />
            <SearchInput aria-label="Search" placeholder="MyStart Search" />
            <SearchIcon c="#2b76c6" />
            <BoxButton aria-label="Search providers"><Arrow s={8} /></BoxButton>
          </SearchBox>
        </AddressRow>
      </Glass>

      <MenuBar>
        {menu.map((m) => (
          <button key={m}>{m}</button>
        ))}
      </MenuBar>
      <BarStack>
        <FavRow>
          <FavItem as="button" $w={56}><Star />المفضّلة</FavItem>
          <Separator />
          <FavItem as="button" $w={23} aria-label="Add to favourites"><Star add /></FavItem>
          {favourites.map((f, i) => (
            <FavItem href="#" key={i} $w={f.w}>
              {f.icon}
              <span>
                {f.latin && <FavLatin dir="ltr">{f.latin}</FavLatin>}
                {f.text}
              </span>
            </FavItem>
          ))}
          <FavItem href="#" $w={108} $muted>
            <PageIe />
            المواقع المقترحة
            <Arrow />
          </FavItem>
          <Chevrons $push aria-label="More favourites">»</Chevrons>
        </FavRow>
        <TabRow>
          <BrowserTab><BbIcon />Blackboard Learn</BrowserTab>
          <BrowserTab $blank aria-label="New tab" />
          <CommandArea>
            <CommandBar>
              <Command $w={34}><Home /><Arrow /></Command>
              <Command $w={34}><Rss /><Arrow c="#8a8f96" /></Command>
              <Command $w={15} aria-label="Mail"><Mail /></Command>
              <Command $w={34}><Printer /><Arrow /></Command>
              <Command $w={46}>الصفحة<Arrow /></Command>
              <Command $w={32}>أمان<Arrow /></Command>
              <Command $w={37}>أدوات<Arrow /></Command>
              <Command $w={26}><HelpBall /><Arrow /></Command>
            </CommandBar>
            <Chevrons aria-label="More commands">»</Chevrons>
          </CommandArea>
        </TabRow>
      </BarStack>

      <Viewport>
        <PortalHead>
          <Brand>
            <Logo>
              <Seal />
              <LogoText>
                <LogoScript>جامعة الملك فيصل</LogoScript>
                <LogoName>عمادة التعلم الإلكتروني والتعليم عن بعد</LogoName>
              </LogoText>
              <ELogo />
            </Logo>
            <UserNav>
              <NavLink href="#" $w={92} $user><Person />رائد عيد البشري</NavLink>
              <NavLink href="#" $w={99}><Places />الأماكن الخاصة بي</NavLink>
              <NavLink href="#" $w={89}><Home portal />الصفحة الرئيسية</NavLink>
              <NavLink href="#" $w={59}><HelpBox />تعليمات</NavLink>
              <NavLink href="#" $w={84}><Exit />تسجيل الخروج</NavLink>
            </UserNav>
          </Brand>
          <Tabs>
            <CollapseButton aria-label="Collapse header">
              <svg width="17" height="17" viewBox="0 0 17 17">
                <rect x="1" y="1" width="15" height="15" fill="#fff" stroke="#555" strokeWidth="1.600" />
                <path d="M1 5.500h15" stroke="#555" />
                <path d="M8.500 6v9M6 8.500 8.500 6 11 8.500M6 12.500 8.500 15l2.500-2.500" fill="none" stroke="#111" strokeWidth="1.400" />
              </svg>
            </CollapseButton>
            <PortalTab $w={64}>المؤسسة</PortalTab>
            <PortalTab $w={98} $active>الدورات التدريبية</PortalTab>
            <PortalTab $w={61}>الجماعة</PortalTab>
            <PortalTab $w={133}><TabLatin>Content Collection</TabLatin></PortalTab>
            <PortalTab $w={63}>الخدمات</PortalTab>
          </Tabs>
        </PortalHead>
        <Stage>
          <Panel>
            <QuestionBox $cut>
              <Choices name="q2" items={migration} />
            </QuestionBox>
            <SectionBar $pad={42}>
              السؤال&nbsp; 3
              <PointsNote>
                <span>1 درجات</span>
                <SaveSmall>حفظ الإجابة</SaveSmall>
              </PointsNote>
            </SectionBar>
            <QuestionBox>
              <Prompt>قال الحق عز وجل (فوجدك ضالا فهدى) نوع ضلال الرسول (ص) قبل البعثة والمذكور في الآية هو</Prompt>
              <Choices name="q3" items={verse} />
            </QuestionBox>
            <SectionBar $pad={46}>حفظ وإرسال</SectionBar>
            <Actions>
              <ActionButton>حفظ كافة الإجابات</ActionButton>
              <ActionButton $primary>حفظ وإرسال</ActionButton>
            </Actions>
          </Panel>
          <Scrollbar>
            <ScrollArrow aria-label="Scroll up"><Arrow up /></ScrollArrow>
            <Thumb>
              <svg width="8" height="9" viewBox="0 0 8 9">
                <path d="M0 1h8M0 4h8M0 7h8" stroke="#666" strokeWidth="1.200" />
              </svg>
            </Thumb>
            <ScrollArrow aria-label="Scroll down"><Arrow /></ScrollArrow>
          </Scrollbar>
          <StatusNote>
            <svg width="7" height="9" viewBox="0 0 7 9">
              <path d="m0 1 3.500 3L7 1M0 5l3.500 3L7 5" fill="none" stroke="#777" />
            </svg>
            حالة إكمال الأسئلة:
          </StatusNote>
        </Stage>
      </Viewport>

      <StatusBar>
        {[0, 1, 2, 3, 4, 5, 6].map((n) => (
          <StatusCell key={n} $w={24} />
        ))}
        <StatusCell $w={318}><Globe /><StatusText>إنترنت | وضع التشغيل المحمي: تشغيل</StatusText></StatusCell>
        <StatusCell $w={45}><StatusButton aria-label="Privacy"><PageLock /><Arrow s={8} /></StatusButton></StatusCell>
        <StatusCell $w={80}>
          <StatusButton><ZoomIcon /><StatusText>١٠٠٪</StatusText><Arrow s={8} /></StatusButton>
        </StatusCell>
        <StatusCell $w={17}>
          <svg width="9" height="9" viewBox="0 0 9 9">
            <path d="M0 7h2v2H0zM3 7h2v2H3zM6 7h2v2H6zM0 4h2v2H0zM3 4h2v2H3zM0 1h2v2H0z" fill="#c2bfbd" />
          </svg>
        </StatusCell>
      </StatusBar>

      <Taskbar>
        <TaskButton $w={46} $gap={14} aria-label="Start"><StartOrb /></TaskButton>
        <TaskButton $w={54} $gap={8} $state="active" $stack aria-label="Internet Explorer"><IeIcon s={32} /></TaskButton>
        <TaskButton $w={58} $gap={21} $state="open" aria-label="Explorer"><Folder /></TaskButton>
        <TaskButton $w={27} $gap={18} aria-label="Media Player"><Player /></TaskButton>
        <TaskButton $w={54} $gap={76} $state="open" $stack aria-label="Word"><Word /></TaskButton>
        <LightStreak />
        <Tray>
          <Language>EN</Language>
          <HiddenIcons aria-label="Hidden icons"><Arrow up c="#fff" s={8} /></HiddenIcons>
          <TrayIcons>
            <Plug />
            <Signal />
            <Volume />
          </TrayIcons>
          <Clock>
            ٠٥:١٠ م
            <br />
            ٣٤/٠٥/٠٧
          </Clock>
          <ShowDesktop aria-label="Show desktop" />
        </Tray>
      </Taskbar>
    </Desktop>
  );
}
